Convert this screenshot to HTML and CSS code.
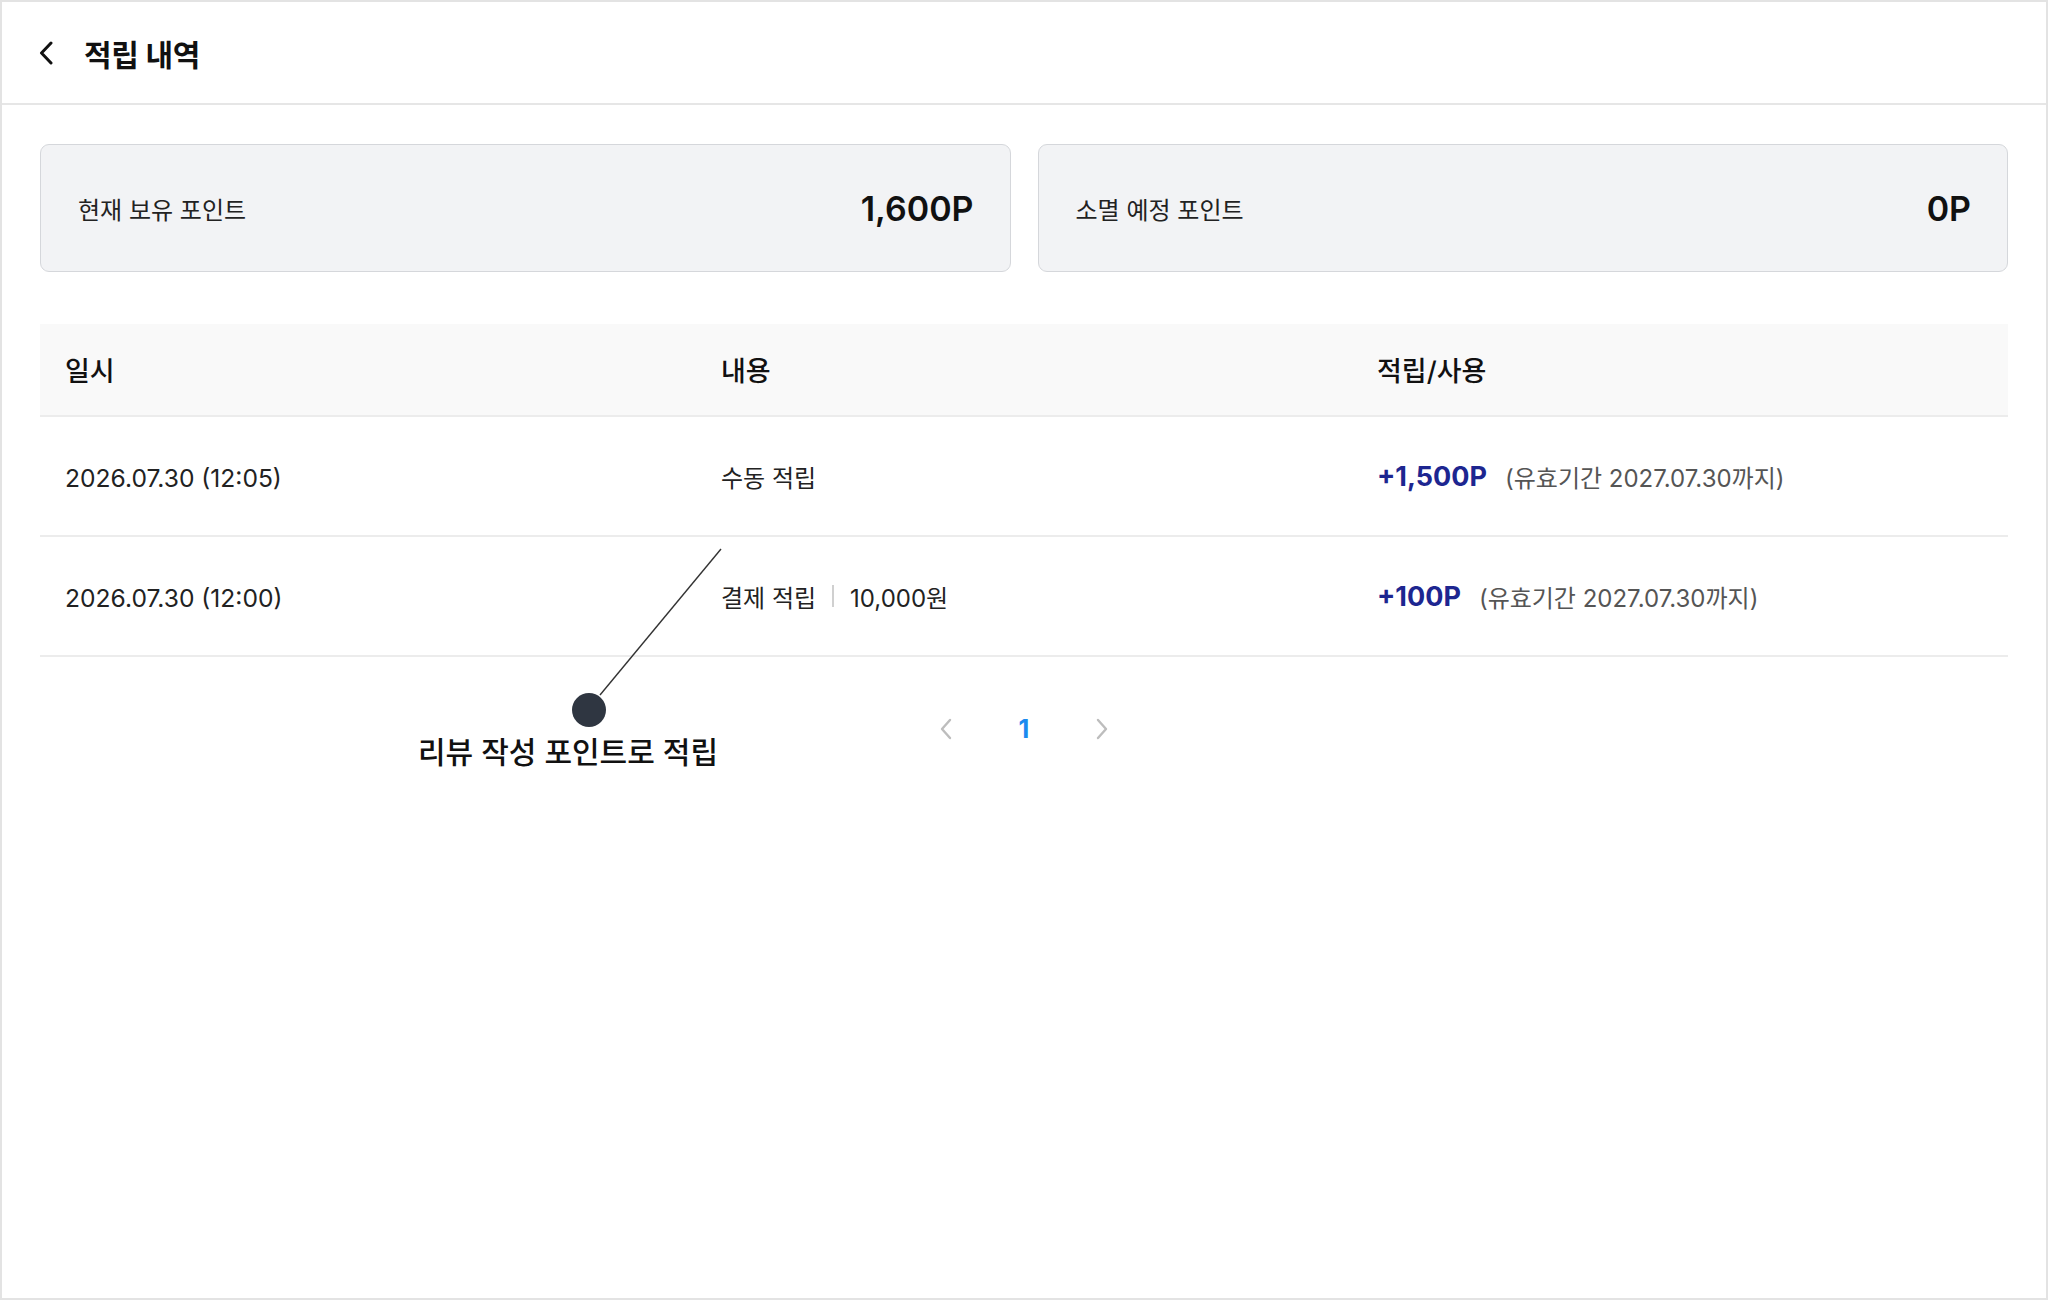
FILE: index.html
```html
<!DOCTYPE html>
<html lang="ko">
<head>
<meta charset="utf-8">
<title>적립 내역</title>
<link rel="stylesheet" href="styles.css">
</head>
<body>
<div class="screen">
  <header class="topbar">
    <button class="back" type="button" aria-label="뒤로">
      <svg width="14" height="24" viewBox="0 0 14 24"><path d="M12 2 L2.5 12 L12 22" fill="none" stroke="#111" stroke-width="3" stroke-linecap="round" stroke-linejoin="round"/></svg>
    </button>
    <h1 class="title">적립 내역</h1>
  </header>

  <main class="content">
    <section class="summary">
      <div class="card">
        <span class="card-label">현재 보유 포인트</span>
        <span class="card-value">1,600P</span>
      </div>
      <div class="card">
        <span class="card-label">소멸 예정 포인트</span>
        <span class="card-value">0P</span>
      </div>
    </section>

    <section class="history">
      <div class="row head">
        <div class="cell">일시</div>
        <div class="cell">내용</div>
        <div class="cell">적립/사용</div>
      </div>
      <div class="row">
        <div class="cell date">2026.07.30 (12:05)</div>
        <div class="cell">수동 적립</div>
        <div class="cell"><span class="amount">+1,500P</span><span class="expiry">(유효기간 2027.07.30까지)</span></div>
      </div>
      <div class="row">
        <div class="cell date">2026.07.30 (12:00)</div>
        <div class="cell">결제 적립<span class="sep"></span>10,000원</div>
        <div class="cell"><span class="amount">+100P</span><span class="expiry">(유효기간 2027.07.30까지)</span></div>
      </div>
    </section>

    <nav class="pager">
      <button class="pg-arrow" type="button" aria-label="이전">
        <svg width="14" height="22" viewBox="0 0 14 22"><path d="M11 2 L3 11 L11 20" fill="none" stroke="#bdbdbd" stroke-width="2.4" stroke-linecap="round" stroke-linejoin="round"/></svg>
      </button>
      <span class="pg-num">1</span>
      <button class="pg-arrow" type="button" aria-label="다음">
        <svg width="14" height="22" viewBox="0 0 14 22"><path d="M3 2 L11 11 L3 20" fill="none" stroke="#bdbdbd" stroke-width="2.4" stroke-linecap="round" stroke-linejoin="round"/></svg>
      </button>
    </nav>
  </main>

  <!-- callout pointing at the payment row -->
  <svg class="callout-mark" width="160" height="190" viewBox="0 0 160 190">
    <line x1="29" y1="156" x2="150" y2="10" stroke="#333" stroke-width="1.4"/>
    <circle cx="18" cy="171" r="17" fill="#2f3641"/>
  </svg>
  <div class="callout-text">리뷰 작성 포인트로 적립</div>
</div>
</body>
</html>
```

FILE: styles.css
```css
* { box-sizing: border-box; }

html, body {
  margin: 0;
  padding: 0;
  background: #fff;
}

body {
  font-family: "Inter", "Noto Sans CJK KR", sans-serif;
  color: #1a1a1a;
}

.screen {
  position: relative;
  width: 2048px;
  height: 1300px;
  border: 2px solid #e3e3e3;
  background: #fff;
  overflow: hidden;
}

/* top bar */
.topbar {
  height: 103px;
  border-bottom: 2px solid #e6e6e6;
  display: flex;
  align-items: center;
  padding-left: 37px;
  gap: 31px;
}

.back {
  border: 0;
  background: none;
  padding: 0;
  display: flex;
  align-items: center;
}

.title {
  margin: 0;
  font-size: 30px;
  font-weight: 700;
  color: #111;
  letter-spacing: -0.3px;
}

/* content */
.content {
  padding: 39px 38px 0;
}

.summary {
  display: flex;
  gap: 27px;
}

.card {
  flex: 1;
  height: 128px;
  background: #f2f3f5;
  border: 1.5px solid #d5d7db;
  border-radius: 9px;
  display: flex;
  align-items: center;
  justify-content: space-between;
  padding: 0 36px 0 37px;
}

.card-label {
  font-size: 24px;
  color: #222;
}

.card-value {
  font-size: 34px;
  font-weight: 600;
  color: #111;
}

/* history table */
.history {
  margin-top: 52px;
}

.row {
  display: grid;
  grid-template-columns: repeat(3, 1fr);
  height: 120px;
  border-bottom: 2px solid #ececec;
  align-items: center;
}

.row.head {
  height: 93px;
  background: #f9f9f9;
}

.cell {
  padding-left: 25px;
  font-size: 24px;
  color: #222;
  display: flex;
  align-items: center;
}

.cell.date {
  font-size: 24.6px;
  padding-top: 3px;
}

.row.head .cell {
  font-size: 27px;
  font-weight: 500;
  color: #111;
}

.sep {
  display: inline-block;
  width: 2px;
  height: 22px;
  background: #d0d0d0;
  margin: 0 16px 0 16px;
}

.amount {
  font-size: 27px;
  font-weight: 700;
  color: #1d2690;
  margin-right: 18px;
}

.expiry {
  font-size: 24px;
  color: #555;
}

/* pagination */
.pager {
  display: flex;
  justify-content: center;
  align-items: center;
  gap: 66px;
  margin-top: 52px;
  height: 40px;
}

.pg-arrow {
  border: 0;
  background: none;
  padding: 0;
  display: flex;
}

.pg-num {
  font-size: 25px;
  font-weight: 700;
  color: #1a8bef;
}

/* callout */
.callout-mark {
  position: absolute;
  left: 569px;
  top: 537px;
}

.callout-text {
  position: absolute;
  left: 416px;
  top: 726px;
  font-size: 30px;
  font-weight: 500;
  color: #111;
  white-space: nowrap;
}
```
